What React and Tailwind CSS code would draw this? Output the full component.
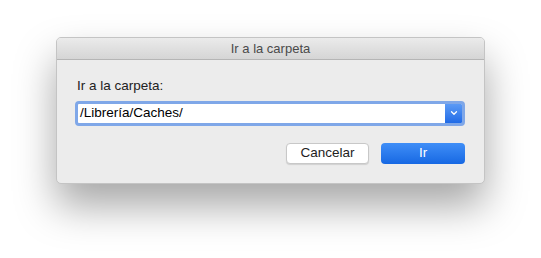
import { ChevronDown } from 'lucide-react';

const App = () => {
    return (
        <div className="w-[541px] h-[258px] bg-white pt-[37px] pl-[56px] font-['Liberation_Sans',Arial,sans-serif]">
            <div className="w-[429px] h-[147px] rounded-[5px] border border-[#c4c4c4] bg-[#ececec] shadow-[0_22px_40px_rgba(0,0,0,0.35)] overflow-hidden flex flex-col">
                <div className="h-[22px] shrink-0 bg-gradient-to-b from-[#ebebeb] to-[#d5d5d5] border-b border-[#b5b5b5] flex items-center justify-center text-[13px] text-[#4a4a4a]">
                    Ir a la carpeta
                </div>
                <div className="flex flex-col pl-[18px] pr-[19px]">
                    <div className="mt-[19px] pl-[2px] text-[13.5px] text-[#222] leading-none">Ir a la carpeta:</div>
                    <div className="mt-[8px] h-[25px] rounded-[4px] border-[3px] border-[#7fa7e8] bg-white flex items-center overflow-hidden">
                        <span className="flex-1 pl-[2px] text-[13.5px] text-black leading-none">/Librería/Caches/</span>
                        <div className="w-[17px] h-full bg-gradient-to-b from-[#5b9af5] to-[#1f6ae6] flex items-center justify-center">
                            <ChevronDown size={10} strokeWidth={3} color="white" />
                        </div>
                    </div>
                    <div className="mt-[17px] flex justify-end gap-[12px]">
                        <button className="w-[83px] h-[21px] rounded-[4px] border border-[#c8c8c8] bg-white text-[13.5px] text-[#222] leading-none shadow-[0_1px_1px_rgba(0,0,0,0.12)]">
                            Cancelar
                        </button>
                        <button className="w-[84px] h-[21px] rounded-[4px] bg-gradient-to-b from-[#3f8ef7] to-[#1668e3] text-[13.5px] text-white leading-none">
                            Ir
                        </button>
                    </div>
                </div>
            </div>
        </div>
    );
};

export default App;
